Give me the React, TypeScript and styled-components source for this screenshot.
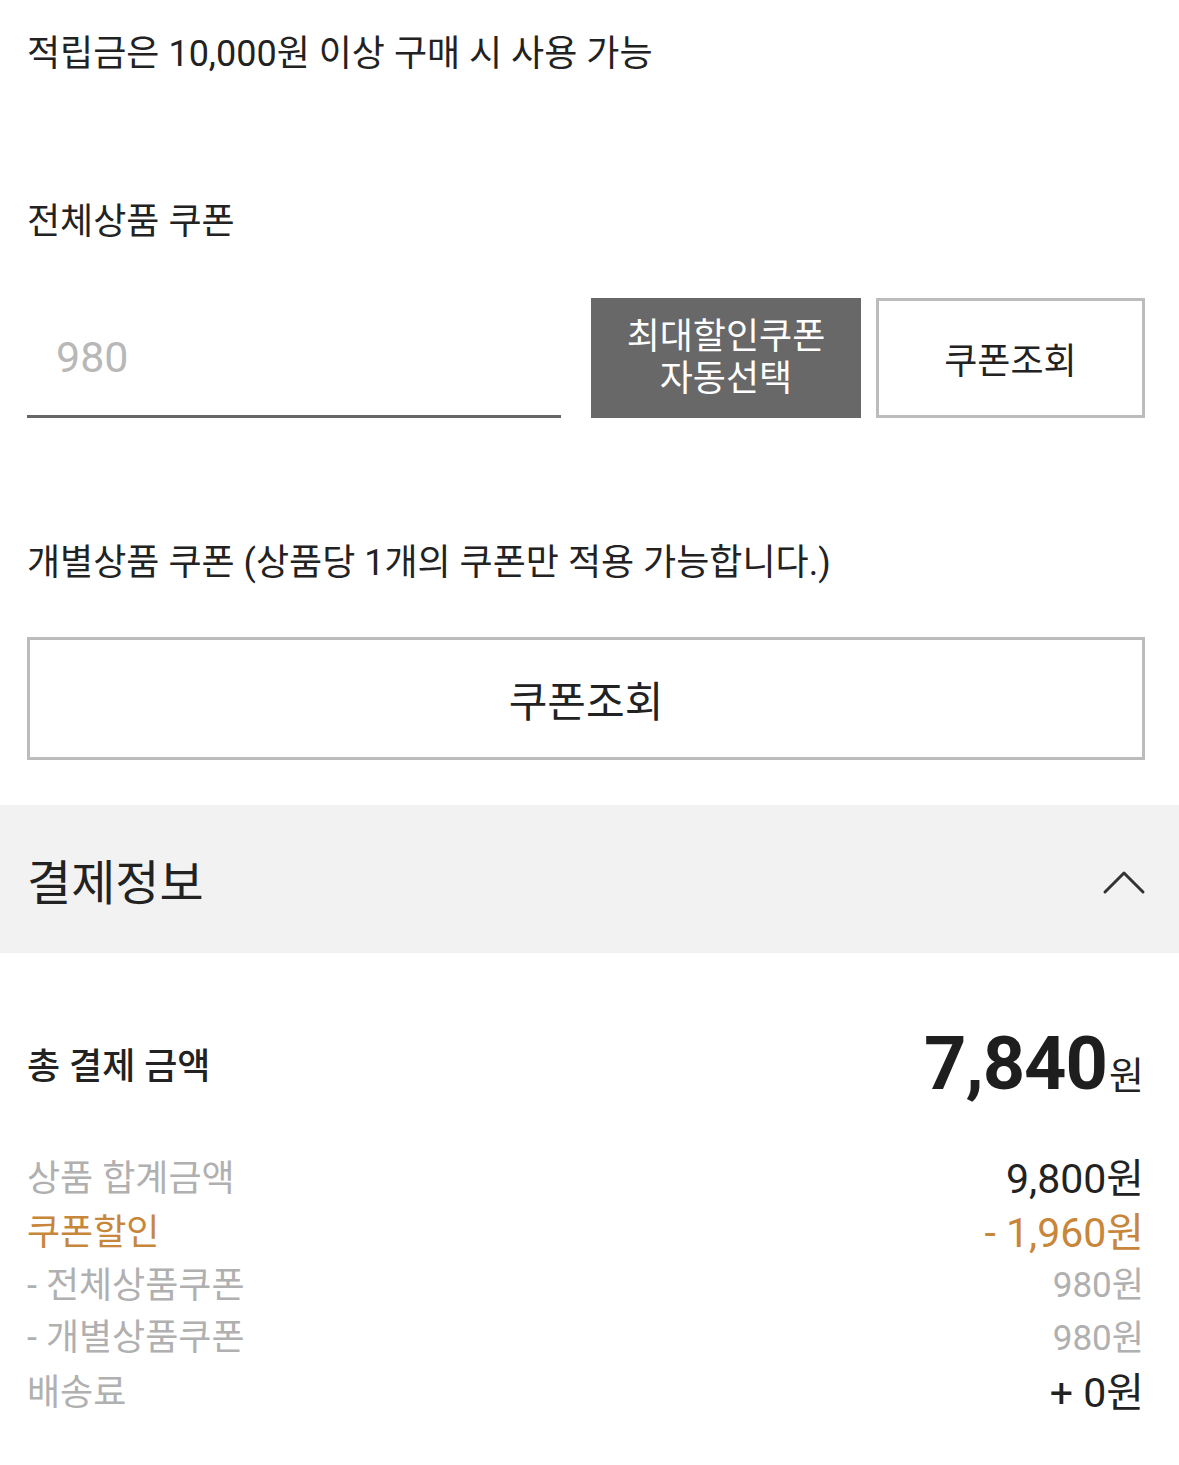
import React from "react";
import styled, { createGlobalStyle } from "styled-components";

const GlobalStyle = createGlobalStyle`
    * {
        box-sizing: border-box;
    }
    body {
        margin: 0;
        background: #fff;
        font-family: Roboto, "Noto Sans CJK KR", sans-serif;
        color: #222;
    }
`;

interface PriceRow {
    label: string;
    value: string;
    kind: "main" | "coupon" | "sub";
    valueTone?: "dark" | "coupon" | "muted";
    height: number;
}

const priceRows: PriceRow[] = [
    { label: "상품 합계금액", value: "9,800원", kind: "main", valueTone: "dark", height: 54 },
    { label: "쿠폰할인", value: "- 1,960원", kind: "coupon", valueTone: "coupon", height: 54 },
    { label: "- 전체상품쿠폰", value: "980원", kind: "sub", valueTone: "muted", height: 51 },
    { label: "- 개별상품쿠폰", value: "980원", kind: "sub", valueTone: "muted", height: 54 },
    { label: "배송료", value: "+ 0원", kind: "main", valueTone: "dark", height: 56 },
];

const labelColor = {
    main: "#b0b0b0",
    coupon: "#c8863a",
    sub: "#b0b0b0",
};

const valueColor = {
    dark: "#222",
    coupon: "#c8863a",
    muted: "#b0b0b0",
};

const App: React.FC = () => {
    return (
        <>
            <GlobalStyle />
            <Page>
                <CouponArea>
                    <Notice>적립금은 10,000원 이상 구매 시 사용 가능</Notice>

                    <SectionLabel $top={128}>전체상품 쿠폰</SectionLabel>
                    <CouponRow>
                        <CouponInput placeholder="980" />
                        <AutoButton>
                            최대할인쿠폰
                            <br />
                            자동선택
                        </AutoButton>
                        <OutlineButton $size={36}>쿠폰조회</OutlineButton>
                    </CouponRow>

                    <SectionLabel $top={125}>개별상품 쿠폰 (상품당 1개의 쿠폰만 적용 가능합니다.)</SectionLabel>
                    <WideButton $size={42}>쿠폰조회</WideButton>
                </CouponArea>

                <PaymentHeader>
                    <PaymentTitle>결제정보</PaymentTitle>
                    <svg width="44" height="28" viewBox="0 0 44 28" fill="none">
                        <path d="M3 24 L22 5 L41 24" stroke="#333" strokeWidth="3" strokeLinecap="round" strokeLinejoin="round" />
                    </svg>
                </PaymentHeader>

                <Summary>
                    <TotalRow>
                        <TotalLabel>총 결제 금액</TotalLabel>
                        <TotalAmount>
                            <TotalNumber>7,840</TotalNumber>
                            <TotalUnit>원</TotalUnit>
                        </TotalAmount>
                    </TotalRow>

                    <PriceList>
                        {priceRows.map((row, i) => (
                            <Row key={i} $height={row.height}>
                                <RowLabel $kind={row.kind}>{row.label}</RowLabel>
                                <RowValue $kind={row.kind} $tone={row.valueTone ?? "dark"}>
                                    {row.value}
                                </RowValue>
                            </Row>
                        ))}
                    </PriceList>
                </Summary>
            </Page>
        </>
    );
};

export default App;

const Page = styled.div`
    width: 1179px;
    min-height: 1465px;
    background: #fff;
`;

const CouponArea = styled.section`
    padding: 34px 34px 45px 27px;
`;

const Notice = styled.p`
    margin: 0;
    font-size: 36px;
    line-height: 40px;
    color: #222;
`;

const SectionLabel = styled.p<{ $top: number }>`
    margin: ${(p) => p.$top}px 0 0;
    font-size: 36px;
    line-height: 40px;
    color: #222;
`;

const CouponRow = styled.div`
    display: flex;
    align-items: stretch;
    height: 120px;
    margin-top: 56px;
`;

const CouponInput = styled.input`
    width: 534px;
    height: 120px;
    margin-right: 30px;
    padding: 0 0 0 29px;
    border: none;
    border-bottom: 3px solid #666;
    outline: none;
    background: transparent;
    font-family: Roboto, "Noto Sans CJK KR", sans-serif;
    font-size: 43px;
    color: #222;

    &::placeholder {
        color: #b8b8b8;
    }
`;

const AutoButton = styled.button`
    width: 270px;
    margin-right: 15px;
    border: none;
    background: #686868;
    color: #fff;
    font-family: Roboto, "Noto Sans CJK KR", sans-serif;
    font-size: 36px;
    line-height: 42px;
    padding: 0;
`;

const OutlineButton = styled.button<{ $size: number }>`
    flex: 1;
    border: 3px solid #bcbcbc;
    background: #fff;
    color: #222;
    font-family: Roboto, "Noto Sans CJK KR", sans-serif;
    font-size: ${(p) => p.$size}px;
    padding: 0;
`;

const WideButton = styled(OutlineButton)`
    display: block;
    width: 100%;
    height: 123px;
    margin-top: 54px;
`;

const PaymentHeader = styled.div`
    display: flex;
    align-items: center;
    justify-content: space-between;
    height: 148px;
    padding: 0 33px 0 27px;
    background: #f2f2f2;

    svg {
        margin-top: 6px;
    }
`;

const PaymentTitle = styled.h2`
    margin: 0;
    font-size: 48px;
    font-weight: 400;
    color: #222;
`;

const Summary = styled.section`
    padding: 60px 35px 40px 27px;
`;

const TotalRow = styled.div`
    display: flex;
    align-items: center;
    justify-content: space-between;
    height: 100px;
    margin-bottom: 35px;
`;

const TotalLabel = styled.span`
    font-size: 36px;
    font-weight: 500;
    color: #222;
`;

const TotalAmount = styled.span`
    display: flex;
    align-items: baseline;
    gap: 2px;
`;

const TotalNumber = styled.span`
    font-size: 74px;
    font-weight: 700;
    color: #1e1e1e;
    letter-spacing: -1px;
`;

const TotalUnit = styled.span`
    font-size: 38px;
    color: #222;
`;

const PriceList = styled.div`
    display: flex;
    flex-direction: column;
`;

const Row = styled.div<{ $height: number }>`
    display: flex;
    align-items: center;
    justify-content: space-between;
    height: ${(p) => p.$height}px;
`;

const RowLabel = styled.span<{ $kind: "main" | "coupon" | "sub" }>`
    font-size: 36px;
    color: ${(p) => labelColor[p.$kind]};
`;

const RowValue = styled.span<{ $kind: "main" | "coupon" | "sub"; $tone: "dark" | "coupon" | "muted" }>`
    font-size: ${(p) => (p.$kind === "sub" ? 35 : 41)}px;
    color: ${(p) => valueColor[p.$tone]};
`;
